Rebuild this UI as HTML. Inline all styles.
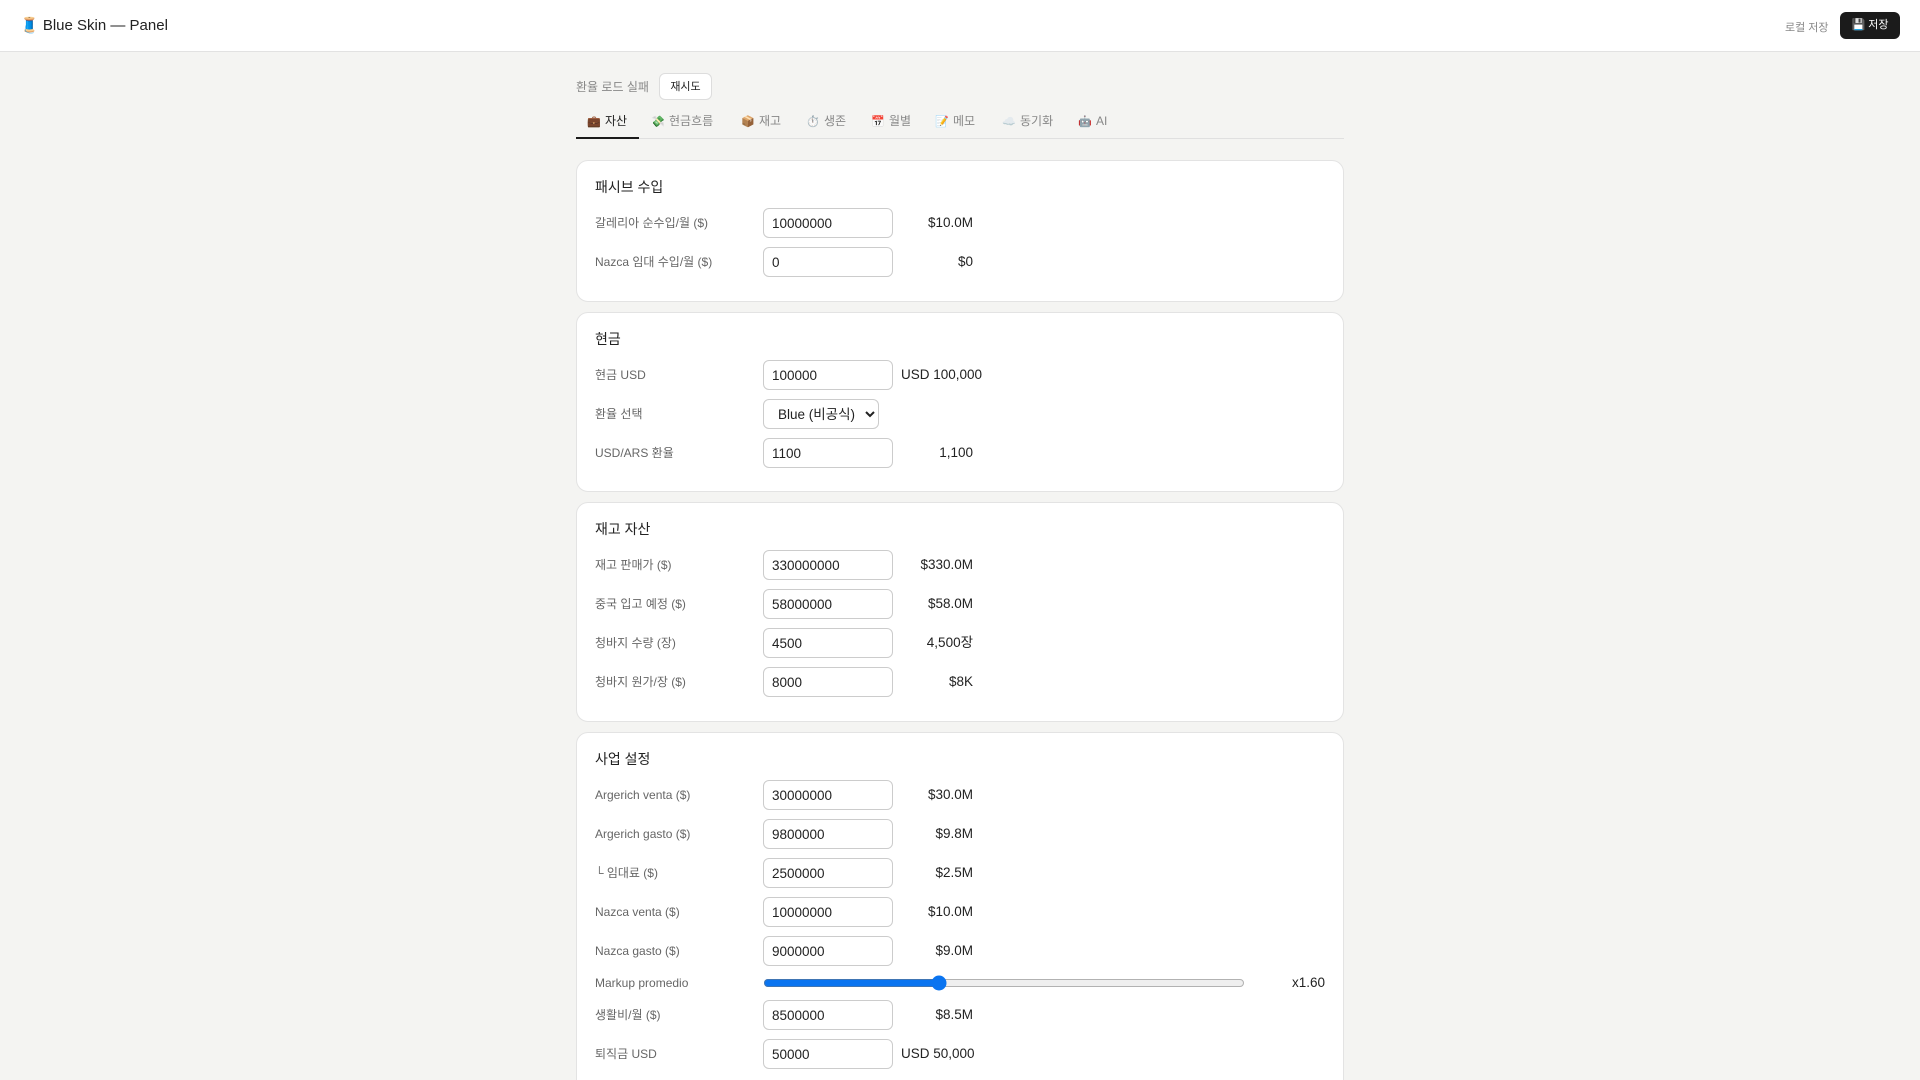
<!DOCTYPE html>
<html><head><meta charset="utf-8">
<style>
*{box-sizing:border-box;margin:0;padding:0}
html,body{width:1920px;height:1080px;overflow:hidden}
body{position:relative;background:#f4f4f2;font-family:"Liberation Sans","Noto Sans CJK KR",sans-serif;color:#222}
.hdr{position:absolute;left:0;top:0;width:1920px;height:52px;background:#fff;border-bottom:1px solid #e2e2e2}
.title{position:absolute;left:20px;top:16px;font-size:15px;color:#222}
.loc{position:absolute;left:1785px;top:19px;font-size:11px;color:#888}
.save{position:absolute;left:1840px;top:12px;width:60px;height:27px;background:#1b1b1b;color:#fff;border-radius:6px;font-size:11px;line-height:27px;text-align:center}
.abs{position:absolute}
.err{left:576px;top:80px;font-size:12px;color:#888;line-height:14px}
.retry{left:659px;top:73px;width:53px;height:27px;background:#fff;border:1px solid #ddd;border-radius:6px;font-size:11px;line-height:27px;text-align:center;color:#222}
.tabline{left:576px;top:138px;width:768px;height:1px;background:#e0e0e0}
.tabact{left:576px;top:137px;width:63px;height:2px;background:#1b1b1b}
.tab{position:absolute;top:114px;font-size:12px;line-height:14px;color:#888;white-space:nowrap}
.tab.a{color:#222}
.tab i{font-style:normal;display:inline-block;width:18px;font-size:11px}
.card{position:absolute;left:576px;width:768px;background:#fff;border:1px solid #e3e3e3;border-radius:12px;padding:16px 18px}
.card h3{font-size:14px;font-weight:normal;height:20px;line-height:20px;margin-bottom:11px;color:#222}
.row{display:flex;align-items:center;height:30px;margin-bottom:9px}
.row label{width:168px;font-size:12px;line-height:14px;color:#666}
.row input[type=text],.row select{width:130px;height:30px;border:1px solid #ccc;border-radius:6px;padding:0 8px;font-size:13.5px;font-family:inherit;color:#222;background:#fff}
.row select{width:116px;padding:0 4px 0 10px}
.v{margin-left:8px;min-width:72px;text-align:right;font-size:13.5px;line-height:14px;color:#222;white-space:nowrap}
.row.s{height:16px}
.row.s input{width:482px;accent-color:#0a74f0;margin:0}
.row.s .v{flex:1}
</style></head><body>
<div class="hdr"><div class="title">🧵 Blue Skin — Panel</div><div class="loc">로컬 저장</div><div class="save">💾 저장</div></div>
<div class="abs err">환율 로드 실패</div>
<div class="abs retry">재시도</div>
<div class="tab a" style="left:587px"><i>💼</i>자산</div>
<div class="tab" style="left:651px"><i>💸</i>현금흐름</div>
<div class="tab" style="left:741px"><i>📦</i>재고</div>
<div class="tab" style="left:806px"><i>⏱️</i>생존</div>
<div class="tab" style="left:871px"><i>📅</i>월별</div>
<div class="tab" style="left:935px"><i>📝</i>메모</div>
<div class="tab" style="left:1002px"><i>☁️</i>동기화</div>
<div class="tab" style="left:1078px"><i>🤖</i>AI</div>
<div class="abs tabline"></div><div class="abs tabact"></div>

<div class="card" style="top:160px;height:142px">
<h3>패시브 수입</h3>
<div class="row"><label>갈레리아 순수입/월 ($)</label><input type="text" value="10000000"><span class="v">$10.0M</span></div>
<div class="row"><label>Nazca 임대 수입/월 ($)</label><input type="text" value="0"><span class="v">$0</span></div>
</div>

<div class="card" style="top:312px;height:180px">
<h3>현금</h3>
<div class="row"><label>현금 USD</label><input type="text" value="100000"><span class="v">USD 100,000</span></div>
<div class="row"><label>환율 선택</label><select><option>Blue (비공식)</option></select></div>
<div class="row"><label>USD/ARS 환율</label><input type="text" value="1100"><span class="v">1,100</span></div>
</div>

<div class="card" style="top:502px;height:220px">
<h3>재고 자산</h3>
<div class="row"><label>재고 판매가 ($)</label><input type="text" value="330000000"><span class="v">$330.0M</span></div>
<div class="row"><label>중국 입고 예정 ($)</label><input type="text" value="58000000"><span class="v">$58.0M</span></div>
<div class="row"><label>청바지 수량 (장)</label><input type="text" value="4500"><span class="v">4,500장</span></div>
<div class="row"><label>청바지 원가/장 ($)</label><input type="text" value="8000"><span class="v">$8K</span></div>
</div>

<div class="card" style="top:732px;height:360px">
<h3>사업 설정</h3>
<div class="row"><label>Argerich venta ($)</label><input type="text" value="30000000"><span class="v">$30.0M</span></div>
<div class="row"><label>Argerich gasto ($)</label><input type="text" value="9800000"><span class="v">$9.8M</span></div>
<div class="row"><label>└ 임대료 ($)</label><input type="text" value="2500000"><span class="v">$2.5M</span></div>
<div class="row"><label>Nazca venta ($)</label><input type="text" value="10000000"><span class="v">$10.0M</span></div>
<div class="row"><label>Nazca gasto ($)</label><input type="text" value="9000000"><span class="v">$9.0M</span></div>
<div class="row s"><label>Markup promedio</label><input type="range" min="0" max="100" value="36"><span class="v">x1.60</span></div>
<div class="row"><label>생활비/월 ($)</label><input type="text" value="8500000"><span class="v">$8.5M</span></div>
<div class="row"><label>퇴직금 USD</label><input type="text" value="50000"><span class="v">USD 50,000</span></div>
</div>
</body></html>
